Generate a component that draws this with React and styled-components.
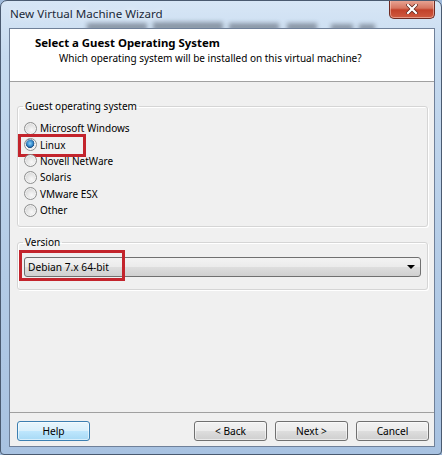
import React, { useState } from 'react';
import styled, { createGlobalStyle } from 'styled-components';

const GlobalStyle = createGlobalStyle`
	html, body {
		margin: 0;
		padding: 0;
		background: #9fbadb;
	}
	* {
		box-sizing: border-box;
	}
`;

const font = `'Noto Sans', 'Liberation Sans', Arial, sans-serif`;

const Window = styled.div`
	width: 442px;
	height: 455px;
	display: flex;
	flex-direction: column;
	padding: 0 6px 7px 8px;
	border: 1px solid #4a5a70;
	border-radius: 7px 7px 4px 4px;
	background: linear-gradient(to bottom, #d7e6f6 0%, #c6daef 12%, #b3cbe6 60%, #a8c2e1 100%);
	font-family: ${font};
	overflow: hidden;
`;

const TitleBar = styled.div`
	position: relative;
	height: 27px;
	flex: none;
	display: flex;
	align-items: flex-start;
	overflow: hidden;
`;

const TitleText = styled.span`
	position: relative;
	z-index: 1;
	margin: 5px 0 0 1px;
	font-size: 11.6px;
	line-height: 16px;
	color: #1b2a3a;
	text-shadow: 0 0 6px rgba(255, 255, 255, 0.9);
`;

// the desktop seen through the glass frame, blurred
const GlassBlur = styled.svg`
	position: absolute;
	left: 60px;
	top: 12px;
`;

const CloseButton = styled.button`
	position: relative;
	z-index: 1;
	margin-left: auto;
	margin-top: -1px;
	width: 46px;
	height: 19px;
	padding: 0;
	display: flex;
	align-items: center;
	justify-content: center;
	border: 1px solid #6e2a22;
	border-top: none;
	border-radius: 0 0 5px 5px;
	background: linear-gradient(to bottom, #e9a898 0%, #d67560 45%, #c2412a 55%, #cf5a40 100%);
	box-shadow: inset 0 0 0 1px rgba(255, 220, 210, 0.5);
	cursor: pointer;
`;

const Client = styled.div`
	flex: 1;
	display: flex;
	flex-direction: column;
	border: 1px solid #6f8099;
	background: #f0f0f0;
`;

const Header = styled.div`
	height: 53px;
	flex: none;
	padding: 6px 0 0 25px;
	background: #fff;
	border-bottom: 1px solid #a0a0a0;
`;

const HeaderTitle = styled.div`
	font-size: 11.4px;
	font-weight: bold;
	line-height: 15px;
	color: #000;
`;

const HeaderSub = styled.div`
	margin: 1px 0 0 24px;
	font-size: 10px;
	line-height: 14px;
	color: #000;
`;

const Body = styled.div`
	flex: 1;
	display: flex;
	flex-direction: column;
	gap: 8px;
	padding: 17px 6px 0 7px;
`;

const Group = styled.fieldset`
	margin: 0;
	padding: ${(p) => p.$pad};
	border: 1px solid #d5d5d5;
	border-radius: 3px;
	box-shadow: 1px 1px 0 #fff, inset 1px 1px 0 #fff;
	min-width: 0;
`;

const Legend = styled.legend`
	padding: 0 2px;
	margin-left: -1px;
	font-size: 10px;
	line-height: 14px;
	color: #000;
`;

const RadioList = styled.div`
	display: flex;
	flex-direction: column;
`;

const RadioRow = styled.label`
	position: relative;
	align-self: flex-start;
	height: 16.4px;
	display: flex;
	align-items: center;
	gap: 3px;
	font-size: 10px;
	color: #000;
	cursor: default;

	${(p) =>
		p.$marked &&
		`
		&::after {
			content: '';
			position: absolute;
			left: -6px;
			right: -21px;
			top: -2px;
			bottom: -4px;
			border: 3px solid #c3242c;
		}
	`}
`;

const RadioDot = styled.span`
	width: 13px;
	height: 13px;
	flex: none;
	border-radius: 50%;
	border: 1px solid #8e8f8f;
	background: ${(p) =>
		p.$checked
			? 'radial-gradient(circle at 45% 40%, #8fd0f7 0%, #3a8fd0 30%, #1c4f86 48%, #e8e8e8 52%, #f7f7f7 100%)'
			: 'radial-gradient(circle at 60% 65%, #f9f9f9 0%, #e4e4e4 45%, #c9c9c9 100%)'};
	box-shadow: inset 0 0 0 1px rgba(255, 255, 255, 0.6);
`;

const SelectWrap = styled.div`
	position: relative;

	&::after {
		content: '';
		position: absolute;
		left: -5px;
		top: -7px;
		width: 100px;
		bottom: -4px;
		border: 3px solid #c3242c;
		pointer-events: none;
	}
`;

const Select = styled.div`
	height: 20px;
	display: flex;
	align-items: center;
	justify-content: space-between;
	padding: 0 4px 0 3px;
	border: 1px solid #707070;
	border-radius: 3px;
	background: linear-gradient(to bottom, #f3f3f3 0%, #ebebeb 48%, #dddddd 52%, #d0d0d0 100%);
	font-size: 10.2px;
	color: #000;
`;

const Arrow = styled.span`
	width: 0;
	height: 0;
	border-left: 4px solid transparent;
	border-right: 4px solid transparent;
	border-top: 4px solid #000;
	margin-right: 1px;
`;

const Footer = styled.div`
	height: 34px;
	flex: none;
	display: flex;
	align-items: flex-start;
	gap: 8px;
	padding: 8px 5px 0 7px;
	border-top: 1px solid #a0a0a0;
`;

const Button = styled.button`
	width: 73px;
	height: 20px;
	padding: 0;
	border: 1px solid ${(p) => (p.$primary ? '#3c7fb1' : '#707070')};
	border-radius: 3px;
	background: ${(p) =>
		p.$primary
			? 'linear-gradient(to bottom, #e8f6fd 0%, #d9f0fc 48%, #bee6fd 52%, #a7d9f5 100%)'
			: 'linear-gradient(to bottom, #f2f2f2 0%, #ebebeb 48%, #dddddd 52%, #cfcfcf 100%)'};
	box-shadow: inset 0 0 0 1px rgba(255, 255, 255, 0.55);
	font-family: ${font};
	font-size: 10.2px;
	color: #000;
	cursor: pointer;
	margin-left: ${(p) => (p.$push ? 'auto' : '0')};
`;

const systems = [
	'Microsoft Windows',
	'Linux',
	'Novell NetWare',
	'Solaris',
	'VMware ESX',
	'Other',
];

const blobs = [
	[18, 10, 60, 8],
	[84, 9, 70, 9],
	[160, 10, 50, 8],
	[218, 10, 30, 8],
	[262, 11, 22, 7],
	[290, 11, 16, 7],
];

const App = () => {
	const [isSelected, setSelected] = useState('Linux');

	return (
		<>
			<GlobalStyle />
			<Window>
				<TitleBar>
					<GlassBlur width='320' height='16' viewBox='0 0 320 16'>
						<defs>
							<filter id='glass' x='-10%' y='-50%' width='120%' height='200%'>
								<feGaussianBlur stdDeviation='2.2' />
							</filter>
						</defs>
						<g filter='url(#glass)' fill='#3a4250' opacity='0.45'>
							{blobs.map(([x, y, w, h]) => (
								<rect key={x} x={x} y={y} width={w} height={h} />
							))}
						</g>
					</GlassBlur>
					<TitleText>New Virtual Machine Wizard</TitleText>
					<CloseButton aria-label='Close'>
						<svg width='12' height='10' viewBox='0 0 12 10'>
							<path d='M2 1 L10 9 M10 1 L2 9' stroke='#5a2018' strokeWidth='3.6' strokeLinecap='square' />
							<path d='M2 1 L10 9 M10 1 L2 9' stroke='#fff' strokeWidth='2.2' strokeLinecap='square' />
						</svg>
					</CloseButton>
				</TitleBar>
				<Client>
					<Header>
						<HeaderTitle>Select a Guest Operating System</HeaderTitle>
						<HeaderSub>Which operating system will be installed on this virtual machine?</HeaderSub>
					</Header>
					<Body>
						<Group $pad='7px 6px 8px 6px'>
							<Legend>Guest operating system</Legend>
							<RadioList>
								{systems.map((name) => (
									<RadioRow
										key={name}
										$marked={name === 'Linux'}
										onClick={() => setSelected(name)}
									>
										<RadioDot $checked={isSelected === name} />
										{name}
									</RadioRow>
								))}
							</RadioList>
						</Group>
						<Group $pad='8px 6px 12px 6px'>
							<Legend>Version</Legend>
							<SelectWrap>
								<Select>
									Debian 7.x 64-bit
									<Arrow />
								</Select>
							</SelectWrap>
						</Group>
					</Body>
					<Footer>
						<Button $primary>Help</Button>
						<Button $push>&lt; Back</Button>
						<Button>Next &gt;</Button>
						<Button>Cancel</Button>
					</Footer>
				</Client>
			</Window>
		</>
	);
};

export default App;
